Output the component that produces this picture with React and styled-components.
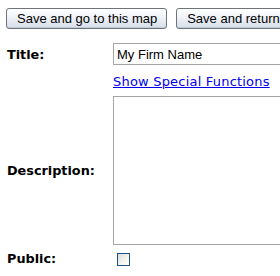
import React from 'react';
import styled, { createGlobalStyle } from 'styled-components';

const GlobalStyle = createGlobalStyle`
  html, body {
    margin: 0;
    padding: 0;
    background: #fff;
    overflow: hidden;
  }
`;

const Page = styled.div`
  width: 280px;
  height: 276px;
  overflow: hidden;
  font-family: "DejaVu Sans", Verdana, sans-serif;
  font-size: 13px;
`;

const Toolbar = styled.div`
  display: flex;
  gap: 9px;
  padding: 8px 0 0 6px;
  white-space: nowrap;
`;

const Button = styled.button`
  flex: none;
  height: 21px;
  padding: 0 9px 1px 10px;
  font-family: "Liberation Sans", Arial, sans-serif;
  font-size: 13px;
  color: #000;
  border: 1px solid #6f7479;
  border-radius: 3px;
  background: linear-gradient(#ffffff 0%, #f1f4f9 40%, #d6deea 100%);
  box-shadow: inset 0 -1px 0 #c2ccd9;
`;

const Form = styled.div`
  display: grid;
  grid-template-columns: 106px 1fr;
  margin-top: 14px;
  padding-left: 7px;
`;

const Label = styled.div`
  font-weight: bold;
  font-size: 12.8px;
  display: flex;
  align-items: center;
  padding-top: ${(p) => p.$shift || '0'};
  color: #000;
`;

const Field = styled.div``;

const TextInput = styled.input`
  box-sizing: border-box;
  width: 200px;
  height: 22px;
  border: 1px solid #a5a5a5;
  padding: 1px 3px;
  font-family: "Liberation Sans", Arial, sans-serif;
  font-size: 13px;
  color: #000;
  outline: none;
`;

const Link = styled.a`
  display: inline-block;
  color: #0000ee;
  text-decoration: underline;
  letter-spacing: 0.2px;
  margin: 9px 0 7px;
`;

const TextArea = styled.textarea`
  display: block;
  box-sizing: border-box;
  width: 200px;
  height: 149px;
  border: 1px solid #a5a5a5;
  resize: none;
  outline: none;
`;

const Check = styled.span`
  display: inline-block;
  box-sizing: border-box;
  width: 13px;
  height: 13px;
  margin: 8px 0 0 4px;
  border: 1px solid #1c5180;
  background: linear-gradient(135deg, #dcdcd7 0%, #f5f5f2 60%, #fff 100%);
`;

export default function App() {
  return (
    <Page>
      <GlobalStyle />
      <Toolbar>
        <Button>Save and go to this map</Button>
        <Button>Save and return to the map list</Button>
      </Toolbar>
      <Form>
        <Label>Title:</Label>
        <Field>
          <TextInput defaultValue="My Firm Name" />
        </Field>
        <div />
        <Field>
          <Link href="#">Show Special Functions</Link>
        </Field>
        <Label>Description:</Label>
        <Field>
          <TextArea />
        </Field>
        <Label $shift="3px">Public:</Label>
        <Field>
          <Check />
        </Field>
      </Form>
    </Page>
  );
}
